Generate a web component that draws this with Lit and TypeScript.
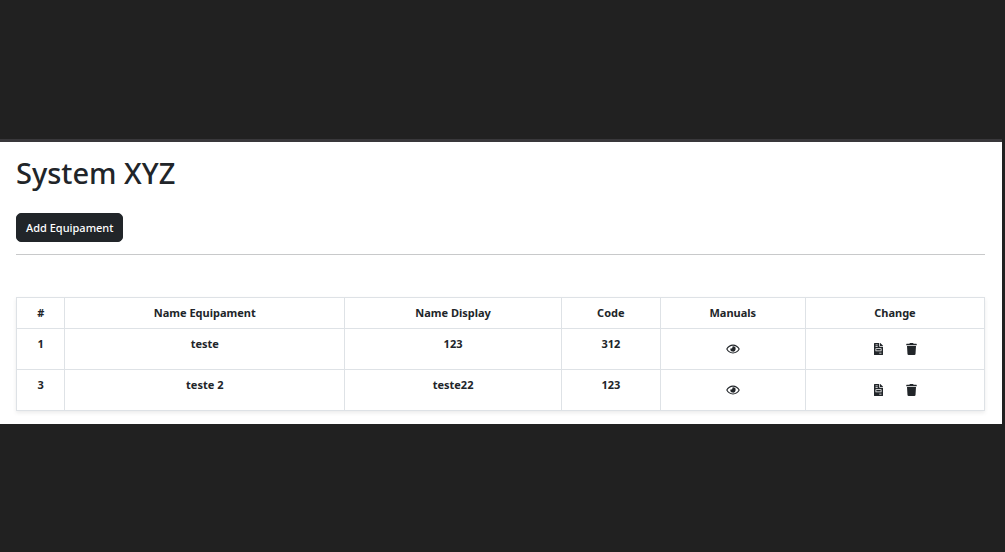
import { LitElement, html, css, svg } from "lit";
import { customElement, property } from "lit/decorators.js";

interface Equipament {
  id: number;
  name: string;
  display: string;
  code: string;
}

const eyeIcon = html`<svg class="eye" viewBox="0 0 576 512" aria-hidden="true">${svg`<path d="M288 144a110.94 110.94 0 0 0-31.24 5 55.4 55.4 0 0 1 7.24 27 56 56 0 0 1-56 56 55.4 55.4 0 0 1-27-7.24A111.71 111.71 0 1 0 288 144zm284.52 97.4C518.29 135.59 410.93 64 288 64S57.68 135.64 3.48 241.41a32.35 32.35 0 0 0 0 29.19C57.71 376.41 165.07 448 288 448s230.32-71.64 284.52-177.41a32.35 32.35 0 0 0 0-29.19zM288 400c-98.65 0-189.09-55-237.93-144C98.91 167 189.34 112 288 112s189.09 55 237.93 144C477.1 345 386.66 400 288 400z"/>`}</svg>`;

const fileIcon = html`<svg class="file" viewBox="0 0 384 512" aria-hidden="true">${svg`<path d="M288 256H96v64h192v-64zm89-151L279.1 7c-4.5-4.5-10.6-7-17-7H256v128h128v-6.1c0-6.3-2.5-12.4-7-16.9zm-153 31V0H24C10.7 0 0 10.7 0 24v464c0 13.3 10.7 24 24 24h336c13.3 0 24-10.7 24-24V160H248c-13.2 0-24-10.8-24-24zM64 72c0-4.42 3.58-8 8-8h80c4.42 0 8 3.58 8 8v16c0 4.42-3.58 8-8 8H72c-4.42 0-8-3.58-8-8V72zm0 64c0-4.42 3.58-8 8-8h80c4.42 0 8 3.58 8 8v16c0 4.42-3.58 8-8 8H72c-4.42 0-8-3.58-8-8v-16zm256 304c0 4.42-3.58 8-8 8h-80c-4.42 0-8-3.58-8-8v-16c0-4.42 3.58-8 8-8h80c4.42 0 8 3.58 8 8v16zm0-200v96c0 8.84-7.16 16-16 16H80c-8.84 0-16-7.16-16-16v-96c0-8.84 7.16-16 16-16h224c8.84 0 16 7.16 16 16z"/>`}</svg>`;

const trashIcon = html`<svg class="trash" viewBox="0 0 448 512" aria-hidden="true">${svg`<path d="M432 32H312l-9.4-18.7A24 24 0 0 0 281.1 0H166.8a23.72 23.72 0 0 0-21.4 13.3L136 32H16A16 16 0 0 0 0 48v32a16 16 0 0 0 16 16h416a16 16 0 0 0 16-16V48a16 16 0 0 0-16-16zM53.2 467a48 48 0 0 0 47.9 45h245.8a48 48 0 0 0 47.9-45L416 128H32z"/>`}</svg>`;

@customElement("equipament-table")
export class EquipamentTable extends LitElement {
  @property({ attribute: false }) items: Equipament[] = [];

  static styles = css`
    :host {
      display: block;
    }
    .table {
      width: 100%;
      table-layout: fixed;
      border-collapse: collapse;
      font-size: 11px;
      line-height: 18px;
      box-shadow: 0 2px 4px rgba(0, 0, 0, 0.08);
    }
    .col-id { width: 5%; }
    .col-name { width: 28.9%; }
    .col-display { width: 22.4%; }
    .col-code { width: 10.2%; }
    .col-manuals { width: 15%; }
    .cell {
      box-sizing: border-box;
      padding: 6px;
      border: 1px solid #dee2e6;
      text-align: center;
      vertical-align: top;
      font-weight: 700;
    }
    .row .cell {
      height: 41px;
    }
    .row .icons {
      padding: 0;
      vertical-align: middle;
    }
    .actions {
      display: flex;
      justify-content: center;
      gap: 10px;
    }
    .action {
      display: flex;
      align-items: center;
      justify-content: center;
      width: 23px;
      height: 24px;
      padding: 0;
      border: 0;
      background: none;
      color: inherit;
      cursor: pointer;
    }
    svg {
      display: block;
      height: 12px;
      fill: currentColor;
    }
    .eye { width: 14px; }
    .file { width: 9px; }
    .trash { width: 11px; }
  `;

  render() {
    return html`
      <table class="table">
        <colgroup>
          <col class="col-id" />
          <col class="col-name" />
          <col class="col-display" />
          <col class="col-code" />
          <col class="col-manuals" />
          <col />
        </colgroup>
        <thead>
          <tr>
            ${["#", "Name Equipament", "Name Display", "Code", "Manuals", "Change"].map(
              (title) => html`<th class="cell" scope="col">${title}</th>`
            )}
          </tr>
        </thead>
        <tbody>
          ${this.items.map(
            (item) => html`
              <tr class="row">
                <th class="cell" scope="row">${item.id}</th>
                <td class="cell">${item.name}</td>
                <td class="cell">${item.display}</td>
                <td class="cell">${item.code}</td>
                <td class="cell icons">
                  <div class="actions">
                    <button class="action" type="button" aria-label="View manuals">${eyeIcon}</button>
                  </div>
                </td>
                <td class="cell icons">
                  <div class="actions">
                    <button class="action" type="button" aria-label="Edit">${fileIcon}</button>
                    <button class="action" type="button" aria-label="Delete">${trashIcon}</button>
                  </div>
                </td>
              </tr>
            `
          )}
        </tbody>
      </table>
    `;
  }
}

@customElement("app-root")
export class AppRoot extends LitElement {
  private items: Equipament[] = [
    { id: 1, name: "teste", display: "123", code: "312" },
    { id: 3, name: "teste 2", display: "teste22", code: "123" },
  ];

  static styles = css`
    :host {
      display: flex;
      flex-direction: column;
      box-sizing: border-box;
      min-height: 100vh;
      padding: 139px 3px 24px 0;
      background: #212121;
      color: #212529;
      font-family: "Segoe UI", "Noto Sans", "Open Sans", sans-serif;
    }
    .page {
      padding: 12px 17px 13px 16px;
      border-top: 3px solid #39383b;
      background: #fff;
    }
    .title {
      margin: 0;
      font-size: 29px;
      font-weight: 500;
      line-height: 38px;
    }
    .add {
      display: block;
      margin: 21px 0 12px;
      padding: 5px 9px;
      border: 1px solid #212529;
      border-radius: 5px;
      background: #212529;
      color: #fff;
      font-family: inherit;
      font-size: 11px;
      font-weight: 500;
      line-height: 17px;
      cursor: pointer;
    }
    .rule {
      height: 0;
      margin: 0 0 42px;
      border: 0;
      border-top: 1px solid #c8c9ca;
    }
  `;

  render() {
    return html`
      <main class="page">
        <h1 class="title">System XYZ</h1>
        <button class="add" type="button">Add Equipament</button>
        <hr class="rule" />
        <equipament-table .items=${this.items}></equipament-table>
      </main>
    `;
  }
}
